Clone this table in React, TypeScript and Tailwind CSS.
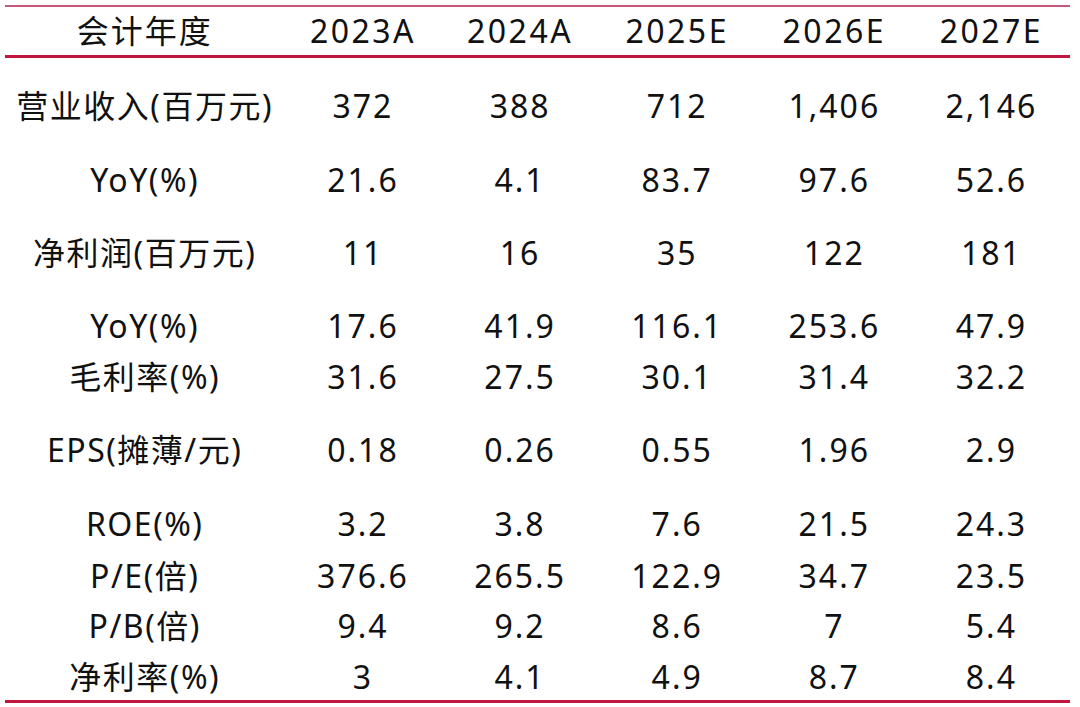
import React from "react";

const cols = ["2023A", "2024A", "2025E", "2026E", "2027E"];

const rows: { label: string; vals: string[] }[] = [
  { label: "营业收入(百万元)", vals: ["372", "388", "712", "1,406", "2,146"] },
  { label: "YoY(%)", vals: ["21.6", "4.1", "83.7", "97.6", "52.6"] },
  { label: "净利润(百万元)", vals: ["11", "16", "35", "122", "181"] },
  { label: "YoY(%)", vals: ["17.6", "41.9", "116.1", "253.6", "47.9"] },
  { label: "毛利率(%)", vals: ["31.6", "27.5", "30.1", "31.4", "32.2"] },
  { label: "EPS(摊薄/元)", vals: ["0.18", "0.26", "0.55", "1.96", "2.9"] },
  { label: "ROE(%)", vals: ["3.2", "3.8", "7.6", "21.5", "24.3"] },
  { label: "P/E(倍)", vals: ["376.6", "265.5", "122.9", "34.7", "23.5"] },
  { label: "P/B(倍)", vals: ["9.4", "9.2", "8.6", "7", "5.4"] },
  { label: "净利率(%)", vals: ["3", "4.1", "4.9", "8.7", "8.4"] },
];

const heights = ["h-[74px]", "h-[73px]", "h-[73px]", "h-[51px]", "h-[73px]", "h-[74px]", "h-[52px]", "h-[50px]", "h-[51px]", "h-[43px]"];

export default function App() {
  return (
    <div
      className="w-[1080px] h-[707px] bg-white text-[#111] overflow-hidden"
      style={{ fontFamily: '"Noto Sans", "Noto Sans CJK SC", sans-serif' }}
    >
      <div className="pt-[5px] px-[5px] w-[1075px]">
        <div className="h-[2px] bg-[#c9577a]" />
        <div className="flex h-[48px] items-center text-[32px] tracking-[2px] leading-[40px]">
          <div className="w-[281px] text-center">会计年度</div>
          {cols.map((c) => (
            <div key={c} className="w-[158px] text-center tracking-[2.5px]">
              {c}
            </div>
          ))}
        </div>
        <div className="h-[3px] bg-[#c0173f]" />
        <div className="h-[28px]" />
        {rows.map((r, i) => (
          <div key={i} className={`flex items-start text-[32px] tracking-[1.5px] leading-[40px] ${heights[i]}`}>
            <div className="w-[281px] text-center">{r.label}</div>
            {r.vals.map((v, j) => (
              <div key={j} className="w-[158px] text-center tracking-[2px]">
                {v}
              </div>
            ))}
          </div>
        ))}
        <div className="h-[3px] bg-[#c0173f]" />
      </div>
    </div>
  );
}
